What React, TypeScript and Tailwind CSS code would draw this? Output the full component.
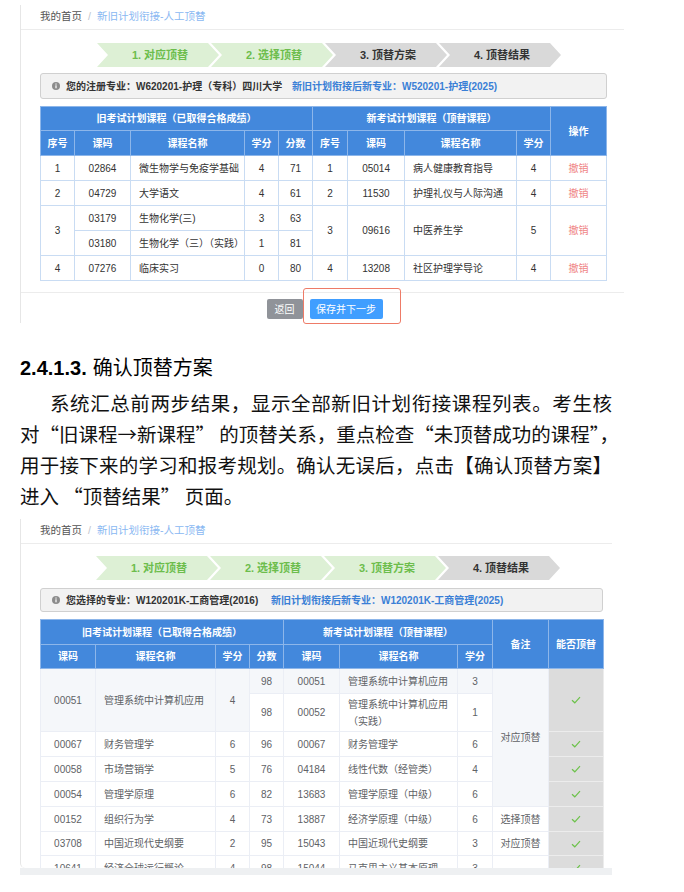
import React from "react";

const SANS = "[font-family:'Liberation_Sans','Noto_Sans_CJK_SC',sans-serif]";
const CJK = "[font-family:'Noto_Sans_CJK_SC',sans-serif]";

const CHEVRON =
  "[clip-path:polygon(0_0,calc(100%_-_11px)_0,100%_50%,calc(100%_-_11px)_100%,0_100%,11px_50%)]";

function Breadcrumb() {
  return (
    <div className="flex h-[25px] items-center gap-[6px] border-b border-[#ececec] pl-[19px] text-[10.5px]">
      <span className="text-[#555]">我的首页</span>
      <span className="text-[#c0c4cc]">/</span>
      <span className="text-[#8ab8f2]">新旧计划衔接-人工顶替</span>
    </div>
  );
}

function Steps({ done }: { done: number }) {
  const labels = ["1. 对应顶替", "2. 选择顶替", "3. 顶替方案", "4. 顶替结果"];
  return (
    <div className="flex">
      {labels.map((l, i) => (
        <div
          key={l}
          className={`flex h-[24px] w-[122px] items-center justify-center pl-[4px] text-[11px] font-bold ${CHEVRON} ${
            i > 0 ? "-ml-[8px]" : ""
          } ${i < done ? "bg-[#ddf0d5] text-[#6cbd4c]" : "bg-[#d9d9d9] text-[#333]"}`}
        >
          {l}
        </div>
      ))}
    </div>
  );
}

function InfoIcon() {
  return (
    <svg width="8" height="8" viewBox="0 0 8 8" className="shrink-0">
      <circle cx="4" cy="4" r="4" fill="#8c8c8c" />
      <rect x="3.4" y="3.3" width="1.2" height="3" fill="#fff" />
      <rect x="3.4" y="1.5" width="1.2" height="1.1" fill="#fff" />
    </svg>
  );
}

function InfoBar({ mine, next, split, w, h }: { mine: string; next: string; split: number; w: string; h: string }) {
  return (
    <div className={`flex items-center rounded-[3px] border border-[#d0d0d0] bg-[#f2f2f2] text-[10px] font-bold ${w} ${h}`}>
      <div className="flex shrink-0 items-center gap-[6px] pl-[11px]" style={{ width: split }}>
        <InfoIcon />
        <span className="text-[#333]">{mine}</span>
      </div>
      <span className="text-[#3a7fd6]">{next}</span>
    </div>
  );
}

function Check() {
  return (
    <svg width="10" height="8" viewBox="0 0 10 8" className="mx-auto">
      <path d="M1 4.2 L3.8 6.8 L9 1.2" fill="none" stroke="#6cc24a" strokeWidth="1.2" />
    </svg>
  );
}

const th1 = "border border-[#8db6ea] bg-[#4388dc] p-0 text-center text-[10px] font-bold text-white";
const td1 = "border border-[#c9dcf3] p-0 text-center text-[10px] text-[#333]";
const td1l = "border border-[#c9dcf3] p-0 pl-[8px] text-left text-[10px] text-[#333]";
const undo = "border border-[#c9dcf3] p-0 text-center text-[10px] text-[#ef8585]";

function PlanTable() {
  return (
    <table className="w-[566px] table-fixed border-collapse">
      <colgroup>
        <col className="w-[34px]" />
        <col className="w-[56px]" />
        <col className="w-[114px]" />
        <col className="w-[34px]" />
        <col className="w-[34px]" />
        <col className="w-[35px]" />
        <col className="w-[57px]" />
        <col className="w-[112px]" />
        <col className="w-[34px]" />
        <col className="w-[56px]" />
      </colgroup>
      <thead>
        <tr className="h-[24px]">
          <th colSpan={5} className={th1}>旧考试计划课程（已取得合格成绩）</th>
          <th colSpan={4} className={th1}>新考试计划课程（顶替课程）</th>
          <th rowSpan={2} className={th1}>操作</th>
        </tr>
        <tr className="h-[25px]">
          <th className={th1}>序号</th>
          <th className={th1}>课码</th>
          <th className={th1}>课程名称</th>
          <th className={th1}>学分</th>
          <th className={th1}>分数</th>
          <th className={th1}>序号</th>
          <th className={th1}>课码</th>
          <th className={th1}>课程名称</th>
          <th className={th1}>学分</th>
        </tr>
      </thead>
      <tbody>
        <tr className="h-[25px]">
          <td className={td1}>1</td>
          <td className={td1}>02864</td>
          <td className={td1l}>微生物学与免疫学基础</td>
          <td className={td1}>4</td>
          <td className={td1}>71</td>
          <td className={td1}>1</td>
          <td className={td1}>05014</td>
          <td className={td1l}>病人健康教育指导</td>
          <td className={td1}>4</td>
          <td className={undo}>撤销</td>
        </tr>
        <tr className="h-[25px]">
          <td className={td1}>2</td>
          <td className={td1}>04729</td>
          <td className={td1l}>大学语文</td>
          <td className={td1}>4</td>
          <td className={td1}>61</td>
          <td className={td1}>2</td>
          <td className={td1}>11530</td>
          <td className={td1l}>护理礼仪与人际沟通</td>
          <td className={td1}>4</td>
          <td className={undo}>撤销</td>
        </tr>
        <tr className="h-[25px]">
          <td rowSpan={2} className={td1}>3</td>
          <td className={td1}>03179</td>
          <td className={td1l}>生物化学(三)</td>
          <td className={td1}>3</td>
          <td className={td1}>63</td>
          <td rowSpan={2} className={td1}>3</td>
          <td rowSpan={2} className={td1}>09616</td>
          <td rowSpan={2} className={td1l}>中医养生学</td>
          <td rowSpan={2} className={td1}>5</td>
          <td rowSpan={2} className={undo}>撤销</td>
        </tr>
        <tr className="h-[25px]">
          <td className={td1}>03180</td>
          <td className={td1l}>生物化学（三）（实践）</td>
          <td className={td1}>1</td>
          <td className={td1}>81</td>
        </tr>
        <tr className="h-[25px]">
          <td className={td1}>4</td>
          <td className={td1}>07276</td>
          <td className={td1l}>临床实习</td>
          <td className={td1}>0</td>
          <td className={td1}>80</td>
          <td className={td1}>4</td>
          <td className={td1}>13208</td>
          <td className={td1l}>社区护理学导论</td>
          <td className={td1}>4</td>
          <td className={undo}>撤销</td>
        </tr>
      </tbody>
    </table>
  );
}

const th2 = "border border-[#8db6ea] bg-[#4388dc] p-0 text-center text-[10px] font-bold text-white";
const c2 = "border border-[#ebeef5] p-0 text-center text-[10px] text-[#606266]";
const l2 = "border border-[#ebeef5] p-0 pl-[8px] text-left text-[10px] leading-[17px] text-[#606266]";
const hi = "bg-[#f5f7fa]";
const ok = "border border-[#ececec] bg-[#dcdcdc] p-0 text-center";

const rows2 = [
  ["00067", "财务管理学", "6", "96", "00067", "财务管理学", "6"],
  ["00058", "市场营销学", "5", "76", "04184", "线性代数（经管类）", "4"],
  ["00054", "管理学原理", "6", "82", "13683", "管理学原理（中级）", "6"],
];

function ResultTable() {
  return (
    <table className="w-[563px] table-fixed border-collapse">
      <colgroup>
        <col className="w-[55px]" />
        <col className="w-[120px]" />
        <col className="w-[34px]" />
        <col className="w-[34px]" />
        <col className="w-[56px]" />
        <col className="w-[118px]" />
        <col className="w-[35px]" />
        <col className="w-[56px]" />
        <col className="w-[55px]" />
      </colgroup>
      <thead>
        <tr className="h-[25px]">
          <th colSpan={4} className={th2}>旧考试计划课程（已取得合格成绩）</th>
          <th colSpan={3} className={th2}>新考试计划课程（顶替课程）</th>
          <th rowSpan={2} className={th2}>备注</th>
          <th rowSpan={2} className={th2}>能否顶替</th>
        </tr>
        <tr className="h-[24px]">
          <th className={th2}>课码</th>
          <th className={th2}>课程名称</th>
          <th className={th2}>学分</th>
          <th className={th2}>分数</th>
          <th className={th2}>课码</th>
          <th className={th2}>课程名称</th>
          <th className={th2}>学分</th>
        </tr>
      </thead>
      <tbody>
        <tr className="h-[25px]">
          <td rowSpan={2} className={`${c2} ${hi}`}>00051</td>
          <td rowSpan={2} className={`${l2} ${hi}`}>管理系统中计算机应用</td>
          <td rowSpan={2} className={`${c2} ${hi}`}>4</td>
          <td className={`${c2} ${hi}`}>98</td>
          <td className={`${c2} ${hi}`}>00051</td>
          <td className={`${l2} ${hi}`}>管理系统中计算机应用</td>
          <td className={`${c2} ${hi}`}>3</td>
          <td rowSpan={5} className={`${c2} ${hi}`}>对应顶替</td>
          <td rowSpan={2} className={ok}><Check /></td>
        </tr>
        <tr className="h-[38px]">
          <td className={c2}>98</td>
          <td className={c2}>00052</td>
          <td className={l2}>
            管理系统中计算机应用
            <br />
            （实践）
          </td>
          <td className={`${c2} text-[#3c4a7a]`}>1</td>
        </tr>
        {rows2.map((r) => (
          <tr key={r[0]} className="h-[25px]">
            <td className={c2}>{r[0]}</td>
            <td className={l2}>{r[1]}</td>
            <td className={c2}>{r[2]}</td>
            <td className={c2}>{r[3]}</td>
            <td className={c2}>{r[4]}</td>
            <td className={l2}>{r[5]}</td>
            <td className={c2}>{r[6]}</td>
            <td className={ok}><Check /></td>
          </tr>
        ))}
        <tr className="h-[25px]">
          <td className={c2}>00152</td>
          <td className={l2}>组织行为学</td>
          <td className={c2}>4</td>
          <td className={c2}>73</td>
          <td className={c2}>13887</td>
          <td className={l2}>经济学原理（中级）</td>
          <td className={c2}>6</td>
          <td className={c2}>选择顶替</td>
          <td className={ok}><Check /></td>
        </tr>
        <tr className="h-[24px]">
          <td className={c2}>03708</td>
          <td className={l2}>中国近现代史纲要</td>
          <td className={c2}>2</td>
          <td className={c2}>95</td>
          <td className={c2}>15043</td>
          <td className={l2}>中国近现代史纲要</td>
          <td className={c2}>3</td>
          <td className={c2}>对应顶替</td>
          <td className={ok}><Check /></td>
        </tr>
        <tr className="h-[25px]">
          <td className={c2}>10641</td>
          <td className={l2}>经济全球运行概论</td>
          <td className={c2}>4</td>
          <td className={c2}>98</td>
          <td className={c2}>15044</td>
          <td className={l2}>马克思主义基本原理</td>
          <td className={c2}>3</td>
          <td className={c2}></td>
          <td className={ok}><Check /></td>
        </tr>
      </tbody>
    </table>
  );
}

export default function App() {
  return (
    <div className={`h-[892px] w-[684px] overflow-hidden bg-white ${SANS}`}>
      {/* first screenshot: plan step */}
      <div className="ml-[20px] mt-[5px] w-[604px] border-l border-[#e6e6e6]">
        <Breadcrumb />
        <div className="ml-[76px] mt-[13px]">
          <Steps done={2} />
        </div>
        <div className="ml-[19px] mt-[6px]">
          <InfoBar
            mine="您的注册专业：W620201-护理（专科）四川大学"
            next="新旧计划衔接后新专业：W520201-护理(2025)"
            split={251}
            w="w-[567px]"
            h="h-[26px]"
          />
        </div>
        <div className="ml-[19px] mt-[7px]">
          <PlanTable />
        </div>
        <div className="relative mt-[11px] flex h-[31px] justify-center border-t border-[#ececec] pt-[6px]">
          <div className="ml-[4px] flex h-[20px] gap-[7px] text-[10px] text-white">
            <div className="flex w-[36px] items-center justify-center rounded-[2px] bg-[#909399]">返回</div>
            <div className="flex w-[73px] items-center justify-center rounded-[2px] bg-[#409eff]">保存并下一步</div>
          </div>
          <div className="absolute left-[282px] top-[-5px] h-[36px] w-[98px] rounded-[3px] border border-[#ee7b67]" />
        </div>
      </div>

      {/* document text */}
      <div className="ml-[20px] mt-[30px] flex items-baseline leading-[28px] text-black">
        <span className="text-[20px] font-bold">2.4.1.3.</span>
        <span className={`ml-[6px] text-[20px] ${CJK}`}>确认顶替方案</span>
      </div>
      <div className={`ml-[20px] mt-[5px] w-[592px] whitespace-nowrap text-[19.5px] leading-[31px] text-[#111] ${CJK}`}>
        <div className="pl-[30px] text-justify [text-align-last:justify]">系统汇总前两步结果，显示全部新旧计划衔接课程列表。考生核</div>
        <div className="text-justify [text-align-last:justify]">对“旧课程→新课程” 的顶替关系，重点检查“未顶替成功的课程”，</div>
        <div className="text-justify [text-align-last:justify]">用于接下来的学习和报考规划。确认无误后，点击【确认顶替方案】</div>
        <div>进入 “顶替结果” 页面。</div>
      </div>

      {/* second screenshot: result step */}
      <div className="ml-[20px] mt-[8px] w-[592px]">
        <div className="overflow-hidden rounded-bl-[5px] border-l border-[#e6e6e6]">
          <Breadcrumb />
          <div className="ml-[75px] mt-[12px]">
            <Steps done={3} />
          </div>
          <div className="ml-[19px] mt-[8px]">
            <InfoBar
              mine="您选择的专业：W120201K-工商管理(2016)"
              next="新旧计划衔接后新专业：W120201K-工商管理(2025)"
              split={230}
              w="w-[563px]"
              h="h-[24px]"
            />
          </div>
          <div className="ml-[19px] mt-[7px] h-[249px] overflow-hidden">
            <ResultTable />
          </div>
        </div>
        <div className="h-[7px] w-[592px] bg-[#eef0f2]" />
      </div>
    </div>
  );
}
